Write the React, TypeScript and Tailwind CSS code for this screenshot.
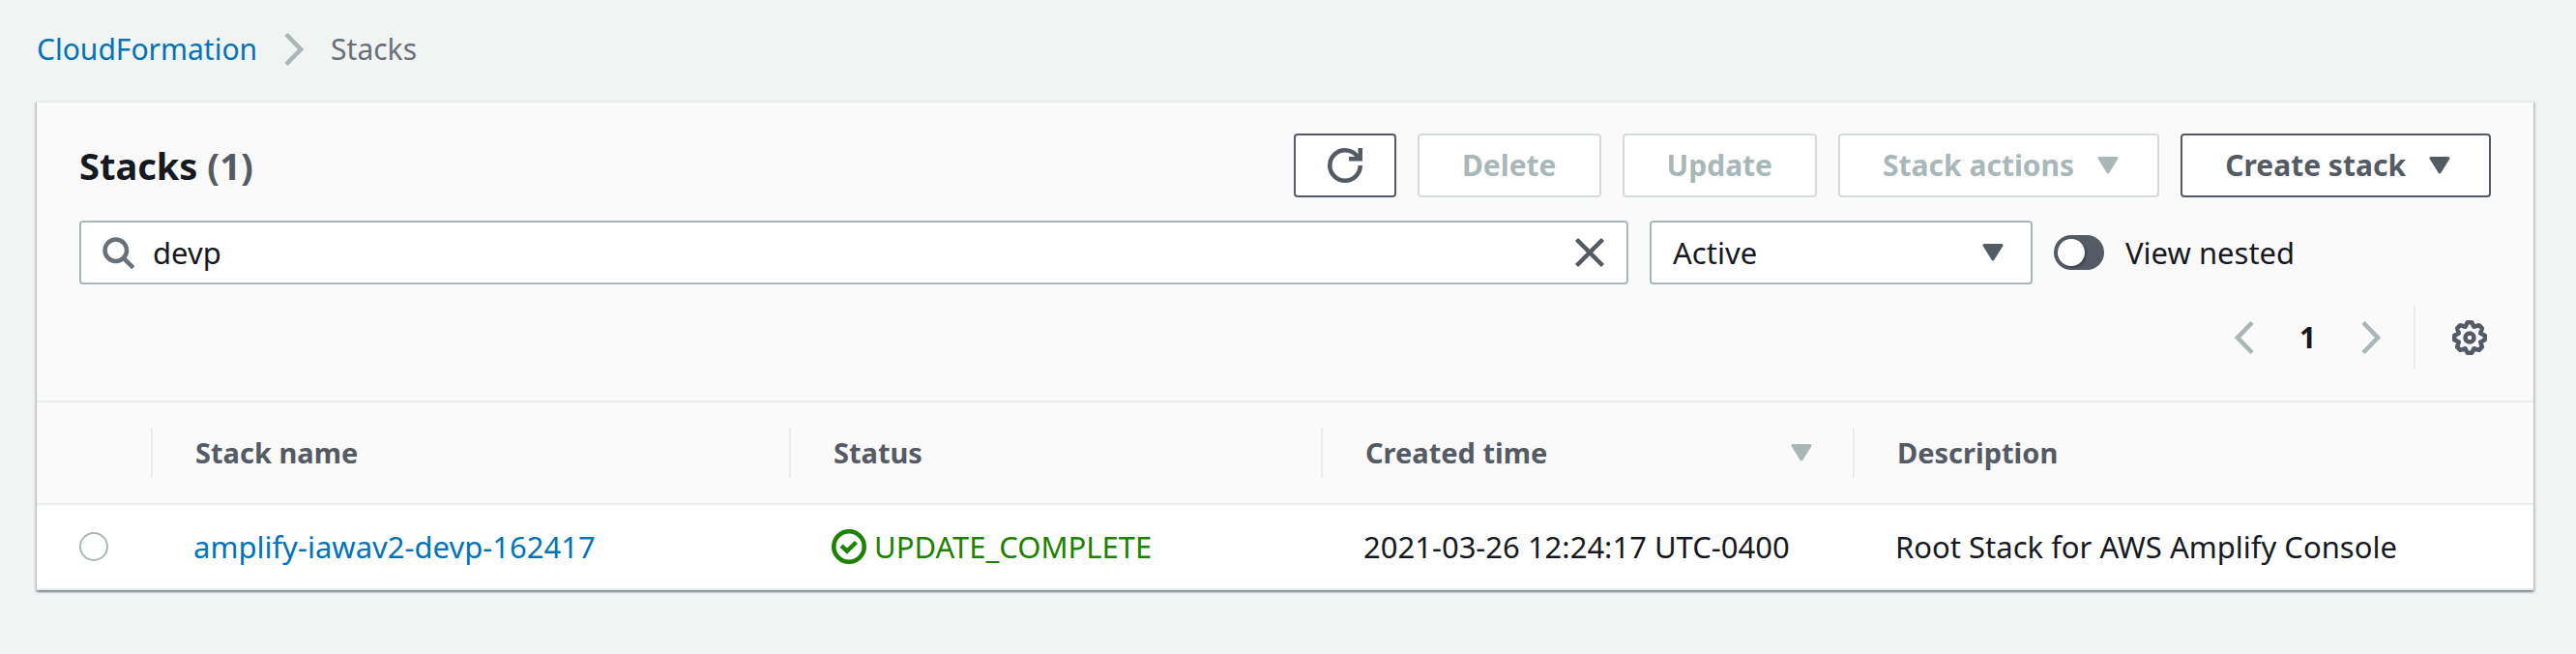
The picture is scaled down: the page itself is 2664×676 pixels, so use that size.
import React, { useState } from "react";

function Caret({ className = "" }: { className?: string }) {
  return (
    <svg className={`h-5 w-[22px] shrink-0 ${className}`} viewBox="0 0 22 20" fill="currentColor" stroke="currentColor" strokeWidth="3" strokeLinejoin="round" aria-hidden="true">
      <path d="M2 2.5H20L11 17Z" />
    </svg>
  );
}

function Chevron({ left = false, className = "" }: { left?: boolean; className?: string }) {
  return (
    <svg className={`h-[34px] w-5 shrink-0 text-[#aab7b8] ${className}`} viewBox="0 0 20 34" fill="none" stroke="currentColor" strokeWidth="4.5" aria-hidden="true">
      <path d={left ? "M18 1.5L3 17L18 32.5" : "M2 1.5L17 17L2 32.5"} />
    </svg>
  );
}

function Icon({ className = "", children }: { className?: string; children: React.ReactNode }) {
  return (
    <svg className={`size-9 shrink-0 ${className}`} viewBox="0 0 16 16" fill="none" stroke="currentColor" strokeWidth="2" aria-hidden="true">
      {children}
    </svg>
  );
}

const button = "flex h-[66px] items-center justify-center rounded-[4px] border-2 bg-white text-[30px] font-bold";
const plain = "px-11";
const menu = "gap-6 pr-10 pl-11";
const normal = "border-[#545b64] text-[#545b64]";
const inactive = "border-[#d5dbdb] text-[#aab7b8]";
const field = "rounded-[4px] border-2 border-[#aab7b8] bg-white";

function HeadCell({ label, width, sorted = false }: { label: string; width: string; sorted?: boolean }) {
  return (
    <th scope="col" aria-sort={sorted ? "descending" : undefined} className={`border-y-2 border-[#eaeded] bg-[#fafafa] p-0 text-left text-[29px] font-bold ${width}`}>
      <div className="my-[26px] flex h-[52px] items-center justify-between border-l-2 border-[#eaeded] pr-[42px] pl-11 text-[#545b64]">
        {label}
        {sorted && <Caret className="text-[#aab7b8]" />}
      </div>
    </th>
  );
}

export default function App() {
  const [query, setQuery] = useState("devp");
  return (
    <div className="min-h-screen bg-[#f2f3f3] pr-11 pl-[38px] font-['Noto_Sans',sans-serif] text-[31px] leading-[44px] text-[#16191f]">
      <nav aria-label="Breadcrumb" className="flex h-[104px] items-center pb-[3px] text-[30px]">
        <a href="#" className="text-[#0073bb]">CloudFormation</a>
        <Chevron className="mx-7" />
        <span className="text-[#687078]">Stacks</span>
      </nav>

      <main className="border-t-2 border-[#eaeded] bg-white shadow-[0_2px_2px_0_rgba(0,28,36,0.3),2px_2px_2px_0_rgba(0,28,36,0.15),-2px_2px_2px_0_rgba(0,28,36,0.15)]">
        <section className="bg-[#fafafa] px-11 py-8">
          <header className="flex items-center gap-[22px]">
            <h1 className="flex-1 text-[38px] font-bold">
              Stacks <span className="text-[#545b64]">(1)</span>
            </h1>
            <button type="button" aria-label="Refresh" className={`${button} w-[106px] ${normal}`}>
              <Icon>
                <path d="M15 8c0 3.87-3.13 7-7 7s-7-3.13-7-7 3.13-7 7-7c2.79 0 5.2 1.63 6.33 4" />
                <path d="M9.8 5H15V0" />
              </Icon>
            </button>
            <button type="button" disabled className={`${button} ${plain} ${inactive}`}>Delete</button>
            <button type="button" disabled className={`${button} ${plain} ${inactive}`}>Update</button>
            <button type="button" disabled className={`${button} ${menu} ${inactive}`}>Stack actions<Caret /></button>
            <button type="button" className={`${button} ${menu} ${normal}`}>Create stack<Caret /></button>
          </header>

          <div className="mt-6 flex items-center gap-[22px]">
            <div className={`flex h-[66px] flex-1 items-center px-5 ${field}`}>
              <Icon className="text-[#687078]">
                <circle cx="7" cy="7" r="5" />
                <path d="M15 15l-4.5-4.5" />
              </Icon>
              <input type="text" aria-label="Filter by stack name" value={query} onChange={(e) => setQuery(e.target.value)} className="min-w-0 flex-1 bg-transparent px-[18px] outline-none" />
              <button type="button" aria-label="Clear filter" onClick={() => setQuery("")} className="text-[#545b64]">
                <Icon><path d="M2 2l12 12M14 2L2 14" /></Icon>
              </button>
            </div>
            <div className={`grid h-[66px] w-[396px] items-center ${field}`}>
              <select aria-label="Filter status" defaultValue="Active" className="col-start-1 row-start-1 h-full appearance-none bg-transparent px-[22px] outline-none">
                <option>Active</option>
                <option>Deleted</option>
              </select>
              <Caret className="pointer-events-none col-start-1 row-start-1 mr-7 justify-self-end text-[#545b64]" />
            </div>
            <label className="flex w-[452px] items-center gap-[22px]">
              <input type="checkbox" role="switch" className="flex h-9 w-[52px] shrink-0 appearance-none items-center rounded-full bg-[#545b64] px-1 before:size-7 before:rounded-full before:bg-white before:shadow-[2px_2px_2px_0_rgba(0,0,0,0.25)] before:content-[''] checked:justify-end" />
              View nested
            </label>
          </div>

          <div className="mt-[22px] flex h-[66px] items-center justify-end">
            <button type="button" disabled aria-label="Previous page"><Chevron left /></button>
            <button type="button" aria-current="page" className="w-[111px] text-center text-[30px] font-bold">1</button>
            <button type="button" disabled aria-label="Next page"><Chevron /></button>
            <div className="ml-[34px] flex h-full items-center border-l-2 border-[#eaeded] pr-1 pl-[38px]">
              <button type="button" aria-label="Preferences" className="text-[#545b64]">
                <Icon>
                  <circle cx="8" cy="8" r="2" />
                  <path strokeLinejoin="round" d="M7 1H9L10 3L12.3 2.3L13.7 3.7L13 6L15 7V9L13 10L13.7 12.3L12.3 13.7L10 13L9 15H7L6 13L3.7 13.7L2.3 12.3L3 10L1 9V7L3 6L2.3 3.7L3.7 2.3L6 3Z" />
                </Icon>
              </button>
            </div>
          </div>
        </section>

        <table className="w-full table-fixed border-separate border-spacing-0">
          <thead>
            <tr>
              <th scope="col" aria-label="Selection" className="w-[118px] border-y-2 border-[#eaeded] bg-[#fafafa] p-0" />
              <HeadCell label="Stack name" width="w-[660px]" />
              <HeadCell label="Status" width="w-[550px]" />
              <HeadCell label="Created time" width="w-[550px]" sorted />
              <HeadCell label="Description" width="w-auto" />
            </tr>
          </thead>
          <tbody>
            <tr className="h-[88px] *:border-b-2 *:border-[#eaeded]">
              <td className="py-0 pl-11">
                <input type="radio" name="stack" aria-label="Select amplify-iawav2-devp-162417" className="block size-[30px] appearance-none rounded-full border-2 border-[#aab7b8] bg-white checked:border-8 checked:border-[#0073bb]" />
              </td>
              <td className="py-0 pl-11"><a href="#" className="text-[#0073bb]">amplify-iawav2-devp-162417</a></td>
              <td className="py-0 pl-11">
                <span className="flex items-center gap-2 text-[#1d8102]">
                  <Icon>
                    <circle cx="8" cy="8" r="7" />
                    <path d="M4.5 7.6L7.1 10.1L11.3 6" />
                  </Icon>
                  UPDATE_COMPLETE
                </span>
              </td>
              <td className="py-0 pl-11 whitespace-nowrap">2021-03-26 12:24:17 UTC-0400</td>
              <td className="py-0 pl-11">Root Stack for AWS Amplify Console</td>
            </tr>
          </tbody>
        </table>
      </main>
    </div>
  );
}
